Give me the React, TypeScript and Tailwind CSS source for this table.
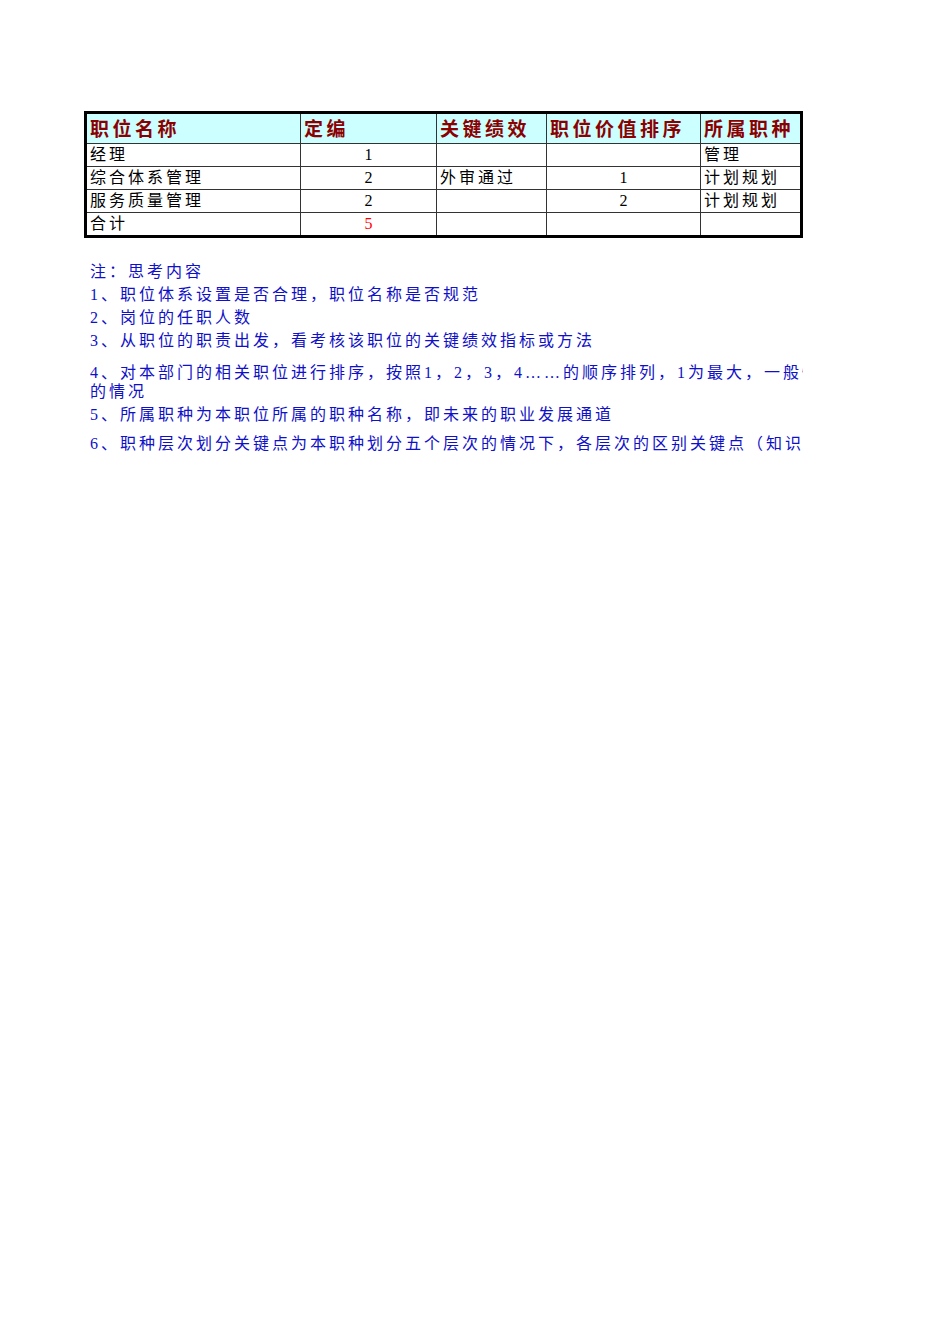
import React from "react";

const FONT = { fontFamily: '"Liberation Serif", "Noto Sans CJK SC", serif' };

const widths = ["w-[214px]", "w-[136px]", "w-[110px]", "w-[154px]", "flex-1"];

function Cell({ i, children, center }: { i: number; children?: React.ReactNode; center?: boolean }) {
  return (
    <div
      className={`${widths[i]} ${i < 4 ? "border-r border-[#333]" : ""} ${center ? "justify-center" : "justify-start pl-[3px]"} flex items-end pb-[1px] overflow-hidden whitespace-nowrap`}
    >
      {children}
    </div>
  );
}

const rows: [string, string, string, string, string][] = [
  ["经理", "1", "", "", "管理"],
  ["综合体系管理", "2", "外审通过", "1", "计划规划"],
  ["服务质量管理", "2", "", "2", "计划规划"],
  ["合计", "5", "", "", ""],
];

export default function App() {
  return (
    <div className="w-[950px] h-[1344px] bg-white" style={FONT}>
      <div className="h-[111px]" />
      <div className="ml-[84px] w-[719px] border-[3px] border-black">
        <div className="flex h-[30px] bg-[#ccffff] border-b border-[#333] text-[19px] font-bold tracking-[3.5px] text-[#8b0000] leading-none">
          {["职位名称", "定编", "关键绩效", "职位价值排序", "所属职种"].map((h, i) => (
            <div
              key={i}
              className={`${widths[i]} ${i < 4 ? "border-r border-[#333]" : ""} flex items-center pl-[3px] pt-[2px] whitespace-nowrap overflow-hidden`}
            >
              {h}
            </div>
          ))}
        </div>
        {rows.map((r, ri) => (
          <div
            key={ri}
            className={`flex ${ri < 3 ? "h-[23px] border-b border-[#333]" : "h-[22px]"} text-[16px] tracking-[3px] text-black leading-[20px]`}
          >
            <Cell i={0}>{r[0]}</Cell>
            <Cell i={1} center>
              <span className={ri === 3 ? "text-[#ff0000] tracking-normal" : "tracking-normal"}>{r[1]}</span>
            </Cell>
            <Cell i={2}>{r[2]}</Cell>
            <Cell i={3} center>
              <span className="tracking-normal">{r[3]}</span>
            </Cell>
            <Cell i={4}>{r[4]}</Cell>
          </div>
        ))}
      </div>

      <div className="ml-[90px] mt-[22px] w-[713px] overflow-hidden text-[16px] tracking-[3px] text-[#1010c8] leading-[23px] whitespace-nowrap">
        <div className="h-[23px]">注：思考内容</div>
        <div className="h-[23px]">1、职位体系设置是否合理，职位名称是否规范</div>
        <div className="h-[23px]">2、岗位的任职人数</div>
        <div className="h-[23px]">3、从职位的职责出发，看考核该职位的关键绩效指标或方法</div>
        <div className="h-[11px]" />
        <div className="h-[19px] leading-[19px]">4、对本部门的相关职位进行排序，按照1，2，3，4……的顺序排列，1为最大，一般情况下</div>
        <div className="h-[21px] leading-[19px]">的情况</div>
        <div className="h-[23px]">5、所属职种为本职位所属的职种名称，即未来的职业发展通道</div>
        <div className="h-[6px]" />
        <div className="h-[23px]">6、职种层次划分关键点为本职种划分五个层次的情况下，各层次的区别关键点（知识、技能</div>
      </div>
    </div>
  );
}
